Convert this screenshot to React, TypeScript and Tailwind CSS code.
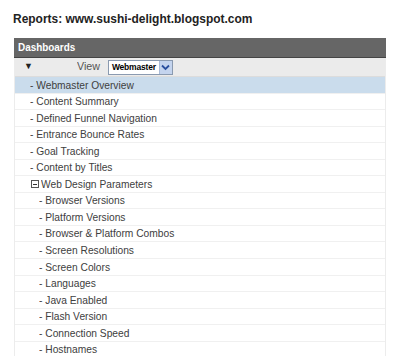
import React from "react";

const top = [
  "Content Summary",
  "Defined Funnel Navigation",
  "Entrance Bounce Rates",
  "Goal Tracking",
  "Content by Titles",
];
const sub = [
  "Browser Versions",
  "Platform Versions",
  "Browser & Platform Combos",
  "Screen Resolutions",
  "Screen Colors",
  "Languages",
  "Java Enabled",
  "Flash Version",
  "Connection Speed",
  "Hostnames",
];

function T({ children }: { children: React.ReactNode }) {
  return <span className="inline-block whitespace-nowrap origin-left scale-x-[0.93]">{children}</span>;
}

function Row({ children, indent, active }: { children: React.ReactNode; indent: string; active?: boolean }) {
  return (
    <div
      className={`h-[16.55px] flex items-center border-b border-[#f0f0f0] ${indent} ${active ? "bg-[#cadcec]" : "bg-white"}`}
    >
      {children}
    </div>
  );
}

export default function App() {
  return (
    <div className="w-[400px] h-[356px] bg-white overflow-hidden text-[#404040]" style={{ fontFamily: '"Liberation Sans", Arial, sans-serif' }}>
      <div className="pl-[13px] pt-[9px] h-[38px] text-[13px] font-bold text-[#222]">
        <span className="inline-block whitespace-nowrap origin-left scale-x-[0.92]">Reports: www.sushi-delight.blogspot.com</span>
      </div>
      <div className="ml-[14px] w-[372px]">
        <div className="h-[20px] bg-[#666666] border-b border-[#444] text-white font-bold text-[11px] flex items-center pl-[4px]">
          <span className="inline-block origin-left scale-x-[0.9]">Dashboards</span>
        </div>
        <div className="border-r border-l border-[#ececec] text-[11px]">
          <div className="h-[19px] bg-[#ebebeb] border-b border-[#dcdcdc] flex items-center">
            <span className="ml-[9px] text-[9px] text-[#222]">▼</span>
            <span className="ml-[44px] w-[24px] text-[11.5px] text-[#555]"><T>View</T></span>
            <div className="ml-[7px] h-[15px] w-[65px] bg-white border border-[#8a9ab0] flex items-center">
              <span className="flex-1 pl-[3px] text-[8.5px] tracking-[-0.2px] font-bold text-black">Webmaster</span>
              <span className="w-[13px] h-[13px] bg-[#c4d4ee] border-l border-[#a9bbd8] flex items-center justify-center">
                <svg width="9" height="7" viewBox="0 0 9 7"><path d="M1 1.5 L4.5 5 L8 1.5" stroke="#2a4f9e" strokeWidth="1.8" fill="none" /></svg>
              </span>
            </div>
          </div>
          <Row indent="pl-[15px]" active><T>- Webmaster Overview</T></Row>
          {top.map((t) => (
            <Row key={t} indent="pl-[15px]"><T>- {t}</T></Row>
          ))}
          <Row indent="pl-[16px]">
            <span className="w-[8px] h-[8px] border border-[#555] flex items-center justify-center mr-[2px]">
              <span className="w-[4px] h-[1px] bg-[#333]" />
            </span>
            <T>Web Design Parameters</T>
          </Row>
          {sub.map((t) => (
            <Row key={t} indent="pl-[24px]"><T>- {t}</T></Row>
          ))}
        </div>
      </div>
    </div>
  );
}
